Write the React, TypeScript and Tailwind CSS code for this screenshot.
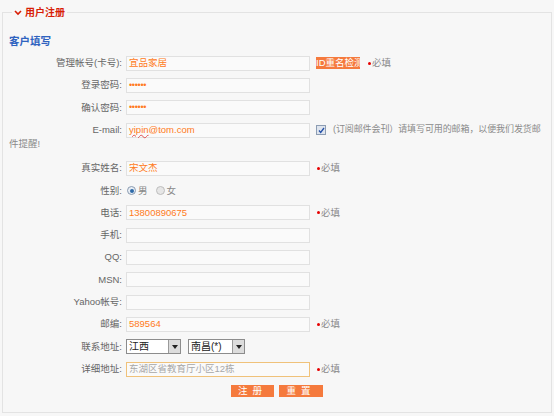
const font = "font-['Liberation_Sans','Noto_Sans_CJK_SC',sans-serif]"

function Required({ className = '' }: { className?: string }) {
  return (
    <span className={`flex items-center text-[9.5px] text-[#8a8a8a] ${className}`}>
      <span className="mr-[1px] inline-block h-[3px] w-[3px] rounded-full bg-[#e60000]" />
      必填
    </span>
  )
}

function Field({ value, password, className = '' }: { value?: React.ReactNode; password?: boolean; className?: string }) {
  return (
    <div
      className={`flex h-[15px] w-[184px] items-center border border-[#e1e1e1] bg-[#fafafa] pl-[2px] text-[9.5px] text-[#ff7a22] ${className}`}
    >
      {password ? <span className="text-[9px] tracking-[-0.3px]">••••••</span> : value}
    </div>
  )
}

function Row({ label, children }: { label: string; children?: React.ReactNode }) {
  return (
    <div className="flex h-[22.3px] items-center">
      <div className="w-[119px] shrink-0 text-right text-[9.5px] text-[#666]">{label}</div>
      <div className="ml-[4px] flex items-center">{children}</div>
    </div>
  )
}

function Radio({ checked }: { checked?: boolean }) {
  return (
    <span
      className={`inline-flex h-[9px] w-[9px] items-center justify-center rounded-full border ${
        checked ? 'border-[#8a9bb0] bg-[#e8eef5]' : 'border-[#bdbdbd] bg-[#e6e6e6]'
      }`}
    >
      {checked && <span className="h-[4px] w-[4px] rounded-full bg-[#2d6aa8]" />}
    </span>
  )
}

function Select({ value, width }: { value: string; width: string }) {
  return (
    <div className={`flex h-[15px] items-center border border-[#8c8c8c] bg-white ${width}`}>
      <span className="flex-1 pl-[2px] text-[10px] text-[#222]">{value}</span>
      <span className="flex h-full w-[12px] items-center justify-center border-l border-[#9a9a9a] bg-[#dcdcdc]">
        <svg width="6" height="4" viewBox="0 0 6 4">
          <path d="M0 0h6L3 4z" fill="#222" />
        </svg>
      </span>
    </div>
  )
}

export default function App() {
  return (
    <div className={`h-[416px] w-[554px] overflow-hidden bg-[#f7f7f7] pl-[2px] pt-[12px] ${font}`}>
      <div className="relative h-[401px] w-[550px] border border-[#e3e3e3]">
        <div className="absolute -top-[8px] left-[9px] flex items-center bg-[#f7f7f7] px-[2px] text-[10px] font-bold text-[#d81e06]">
          <svg width="8" height="6" viewBox="0 0 8 6" className="mr-[3px]">
            <path d="M1 1l3 3 3-3" stroke="#d81e06" strokeWidth="1.6" fill="none" />
          </svg>
          用户注册
        </div>

        <div className="pl-[6px] pt-[21px] text-[10.5px] font-bold leading-[14px] text-[#2f63c0]">客户填写</div>

        <div className="mt-[4px] flex flex-col">
          <Row label="管理帐号(卡号):">
            <Field value="宜品家居" />
            <span className="ml-[6px] h-[12px] w-[44px] overflow-hidden whitespace-nowrap bg-[#f57a3d] text-[9.5px] leading-[12px] text-white">
              ID重名检测
            </span>
            <Required className="ml-[8px]" />
          </Row>
          <Row label="登录密码:">
            <Field password />
          </Row>
          <Row label="确认密码:">
            <Field password />
          </Row>
          <div className="h-[38.3px]">
            <Row label="E-mail:">
              <Field
                value={
                  <>
                    <span className="underline decoration-[#e05050] decoration-wavy">yipin</span>@tom.com
                  </>
                }
              />
              <span className="ml-[6px] flex h-[10px] w-[10px] items-center justify-center border border-[#8d9db3] bg-[#dfe5ee]">
                <svg width="7" height="7" viewBox="0 0 7 7">
                  <path d="M1 3.5l1.7 2L6 1" stroke="#2450a8" strokeWidth="1.3" fill="none" />
                </svg>
              </span>
              <span className="ml-[7px] whitespace-nowrap text-[9px] tracking-[-0.1px] text-[#8a8a8a]">
                (订阅邮件会刊）请填写可用的邮箱，以便我们发货邮
              </span>
            </Row>
            <div className="-mt-[4px] pl-[6px] text-[9.5px] leading-[14px] text-[#8a8a8a]">件提醒!</div>
          </div>
          <Row label="真实姓名:">
            <Field value="宋文杰" />
            <Required className="ml-[7px]" />
          </Row>
          <Row label="性别:">
            <span className="ml-[1px] flex items-center gap-[2px] text-[9.5px] text-[#888]">
              <Radio checked />
              男
              <span className="ml-[4px]" />
              <Radio />
              女
            </span>
          </Row>
          <Row label="电话:">
            <Field value="13800890675" />
            <Required className="ml-[7px]" />
          </Row>
          <Row label="手机:">
            <Field />
          </Row>
          <Row label="QQ:">
            <Field />
          </Row>
          <Row label="MSN:">
            <Field />
          </Row>
          <Row label="Yahoo帐号:">
            <Field />
          </Row>
          <Row label="邮编:">
            <Field value="589564" />
            <Required className="ml-[7px]" />
          </Row>
          <Row label="联系地址:">
            <Select value="江西" width="w-[55px]" />
            <span className="ml-[7px]" />
            <Select value="南昌(*)" width="w-[57px]" />
          </Row>
          <Row label="详细地址:">
            <div className="flex h-[15px] w-[184px] items-center border border-[#f0c27a] bg-[#fafafa] pl-[2px] text-[9.5px] text-[#a8a8a8]">
              东湖区省教育厅小区12栋
            </div>
            <Required className="ml-[7px]" />
          </Row>
          <div className="flex h-[22.3px] items-center pl-[228px]">
            <button className="h-[12px] w-[43px] bg-[#f57a3d] text-[9.5px] leading-[12px] tracking-[5px] text-white">
              注册
            </button>
            <button className="ml-[5px] h-[12px] w-[44px] bg-[#f57a3d] text-[9.5px] leading-[12px] tracking-[5px] text-white">
              重置
            </button>
          </div>
        </div>
      </div>
    </div>
  )
}
